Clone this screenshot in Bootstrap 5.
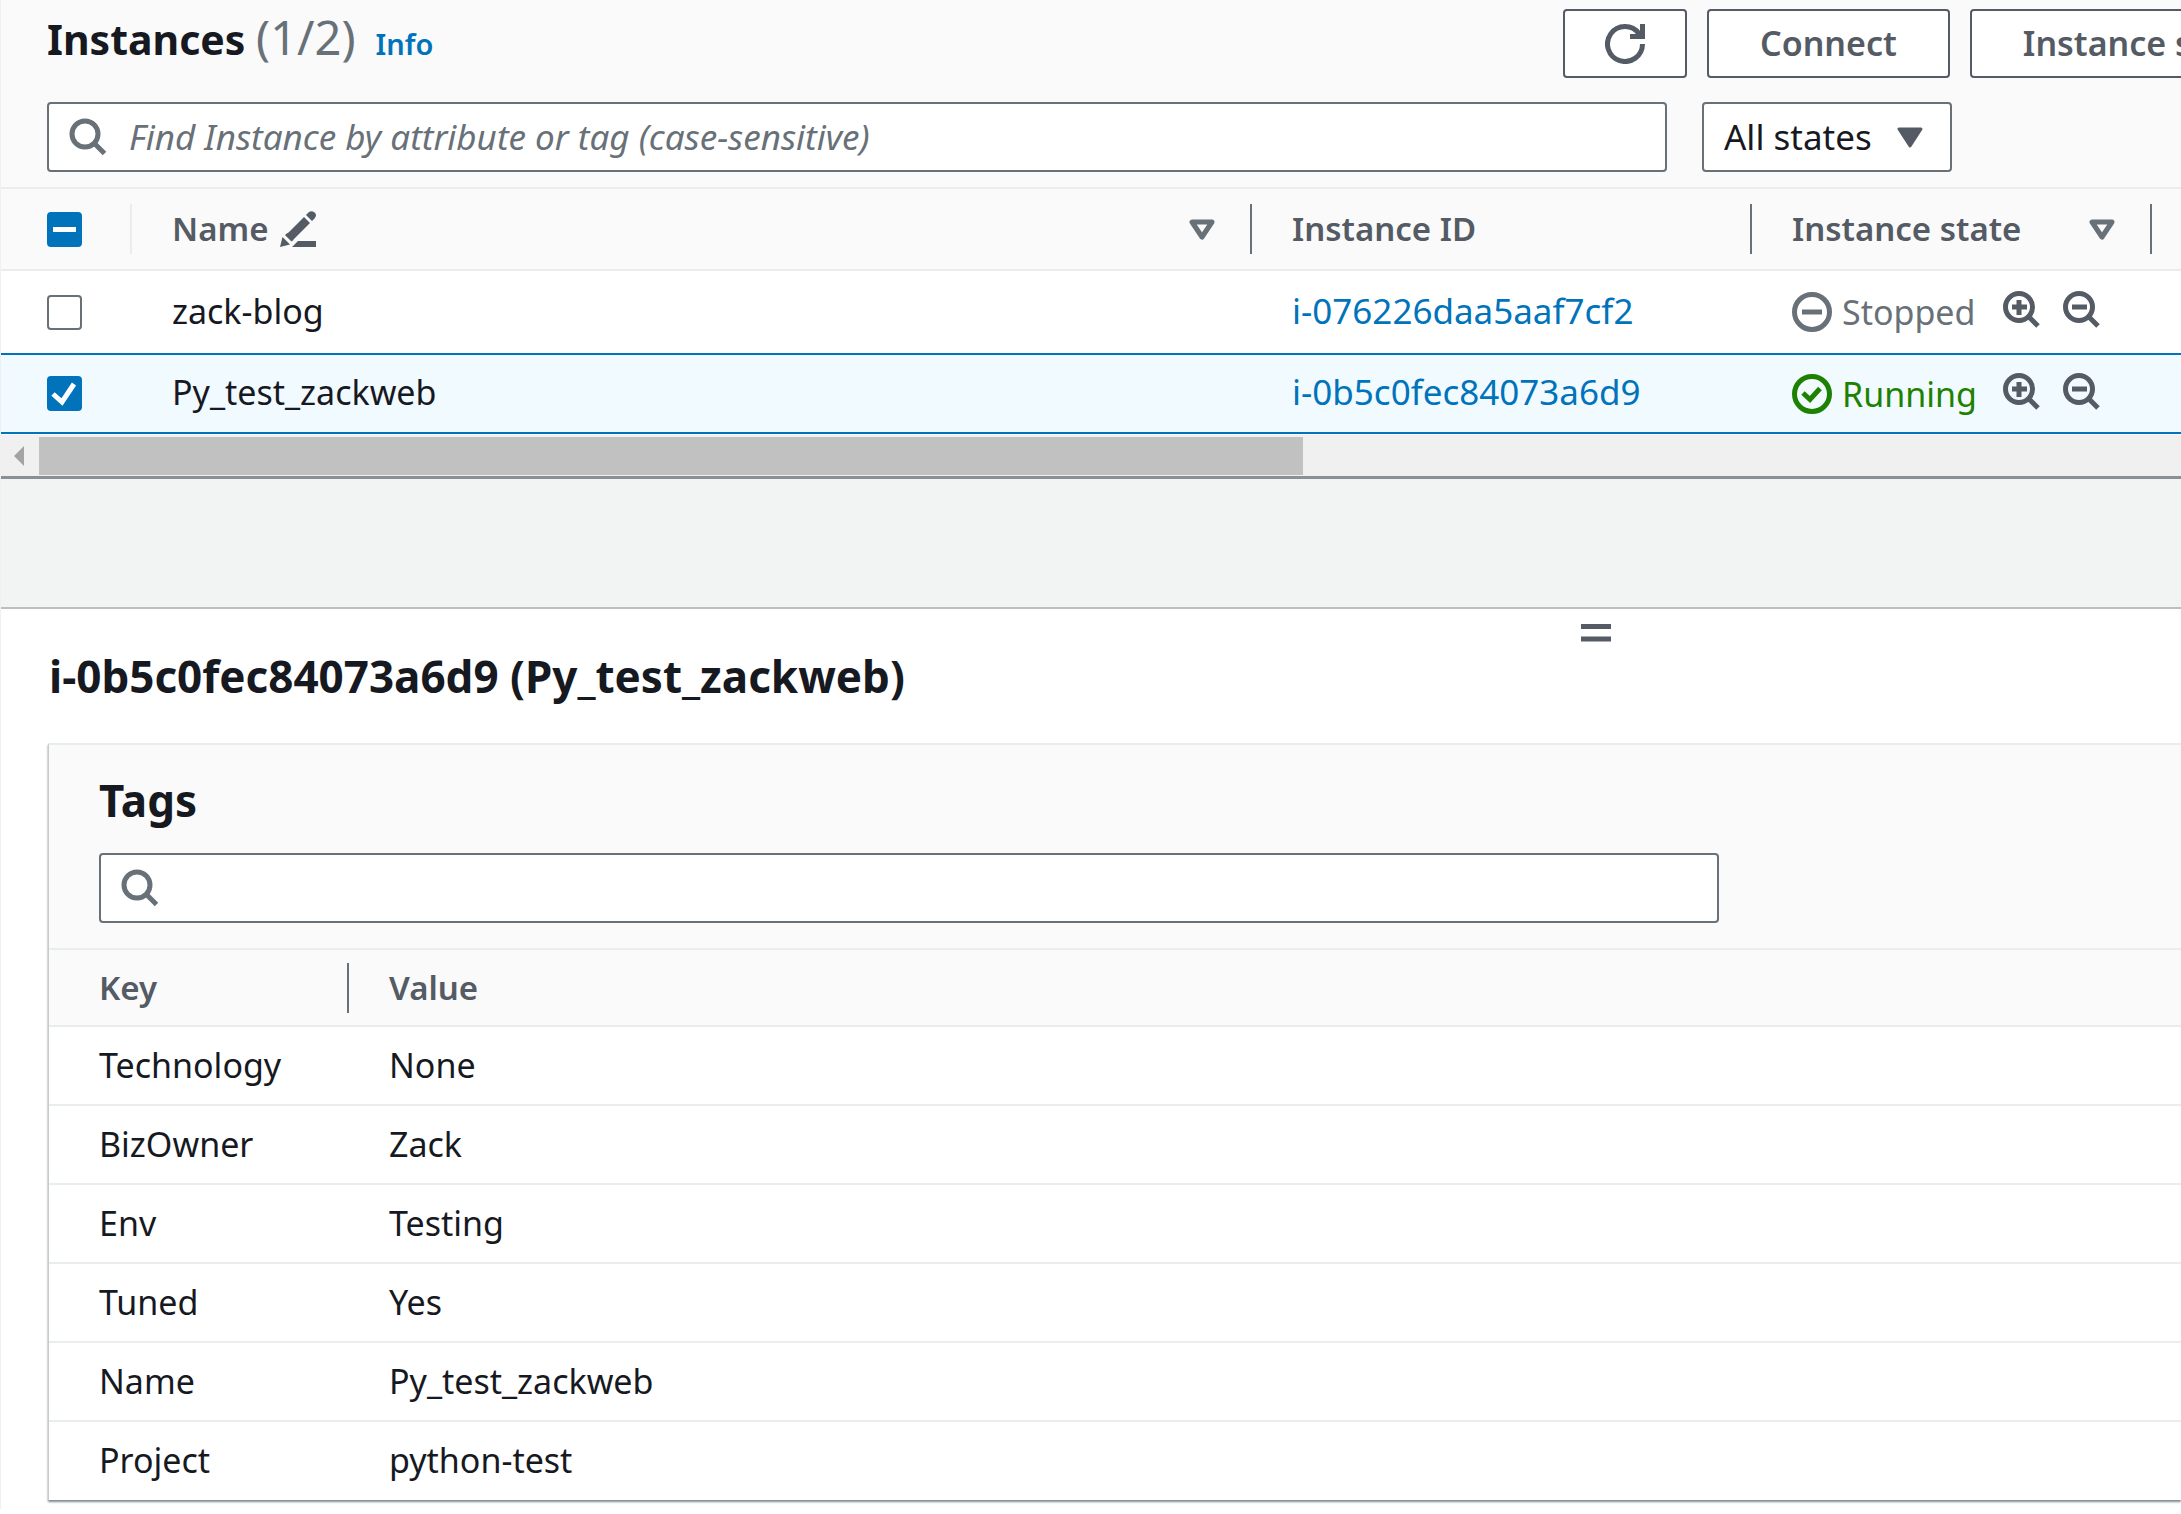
<!DOCTYPE html>
<html lang="en">
<head>
<meta charset="utf-8">
<meta name="viewport" content="width=device-width, initial-scale=1">
<title>Instances</title>
<link href="https://cdn.jsdelivr.net/npm/bootstrap@5.3.0/dist/css/bootstrap.min.css" rel="stylesheet">
<style>
  :root { --ink:#16191f; --soft:#545b64; --mute:#687078; --link:#0073bb; --line:#eaeded; }
  body { font-family:"Noto Sans",sans-serif; font-size:34px; line-height:48px; color:var(--ink); background:#fff; overflow-x:hidden; }
  .console { border-left:1px solid #eff0f0; overflow:hidden; }
  .console svg { display:block; flex:none; }
  .console a { color:var(--link); text-decoration:none; }
  .pane-head { background:#fafafa; padding:9px 0 15px 46px; }
  .title-area { width:calc(100% - 618px); flex:none; }
  .heading { font-size:44px; line-height:60px; font-weight:700; margin:0; }
  h1.heading { font-size:41px; line-height:56px; padding-right:20px; }
  .heading .count { font-size:47px; font-weight:400; color:var(--mute); }
  .info-link { font-size:29px; font-weight:600; }
  .tools { gap:20px; }
  .tool-btn { height:69px; flex:none; background:#fff; border:2px solid var(--soft); border-radius:4px; color:var(--soft); font-size:34px; font-weight:600; line-height:46px; padding:0 51px 2px; white-space:nowrap; }
  .tool-btn.refresh { padding:0 40px; }
  .search { height:70px; background:#fff; border:2px solid var(--mute); border-radius:4px; padding-left:20px; gap:22px; font-size:35px; }
  .search input { border:0; outline:0; background:transparent; min-width:0; padding:0; color:var(--ink); }
  .search input::placeholder { color:var(--mute); font-style:italic; opacity:1; }
  .search-main { width:calc(100% - 514px); }
  .search-tags { width:calc(100% - 462px); }
  .state-pick { width:250px; height:70px; margin-left:35px; }
  .state-pick select { appearance:none; width:100%; height:100%; background:#fff; border:2px solid var(--mute); border-radius:4px; padding:0 20px; color:var(--ink); font-size:35px; }
  .state-pick svg { position:absolute; right:29px; top:25px; pointer-events:none; }
  .grid { width:100%; table-layout:fixed; border-collapse:separate; border-spacing:0; margin:0; }
  .grid th, .grid td { padding:0; vertical-align:middle; white-space:nowrap; }
  .grid th { background:#fafafa; color:var(--soft); font-weight:600; font-size:33px; border-top:2px solid var(--line); border-bottom:2px solid var(--line); }
  .hd { height:50px; padding-left:40px; border-right:2px solid var(--mute); }
  .hd.pale { border-color:var(--line); }
  .hd.bare { border:0; }
  .hd.pick { padding-left:46px; }
  .sort { margin-left:auto; margin-right:35px; }
  .pencil { margin-left:12px; }
  .col-pick { width:131px; }
  .col-id { width:500px; }
  .col-state { width:400px; }
  .col-more { width:29px; }
  .col-key { width:300px; }
  .instances th { height:84px; }
  .grid.instances td { padding:0 0 3px 40px; height:82px; }
  .grid.instances td.state-cell { padding:0 0 0 40px; }
  .grid.instances td.pick-cell { padding:0 0 0 46px; }
  .instances td a { font-size:35px; }
  .instances tr.chosen td { background:#f1faff; height:81px; border-top:2px solid var(--link); border-bottom:2px solid var(--link); }
  .console .tick { appearance:none; width:35px; height:35px; margin:0; display:block; border:2px solid var(--mute); border-radius:4px; background-color:#fff; background-size:35px 35px; background-position:center; }
  .console .tick:checked, .console .tick:indeterminate { background-color:var(--link); border-color:var(--link); }
  .console .tick:checked { background-image:url("data:image/svg+xml,%3Csvg xmlns='http://www.w3.org/2000/svg' viewBox='0 0 35 35'%3E%3Cpath d='M6 18l9 8L27 8' fill='none' stroke='%23fff' stroke-width='5'/%3E%3C/svg%3E"); }
  .console .tick:indeterminate { background-image:url("data:image/svg+xml,%3Csvg xmlns='http://www.w3.org/2000/svg' viewBox='0 0 35 35'%3E%3Cpath d='M6 17.5h23' stroke='%23fff' stroke-width='5'/%3E%3C/svg%3E"); }
  .status { gap:10px; width:211px; }
  .stopped { color:var(--mute); }
  .running { color:#1d8102; }
  .plain-btn { border:0; background:none; padding:0 0 5px; color:var(--soft); }
  .plain-btn + .plain-btn { margin-left:23px; }
  .hscroll { height:42px; background:#f0f0f0; border-top:1px solid #fff; padding:0; }
  .hscroll .arrow { width:38px; }
  .hscroll .thumb { width:58%; height:38px; background:#c1c1c1; }
  .gap-band { height:133px; background:#f2f3f3; border-top:3px solid #879196; border-bottom:2px solid #b9c0c1; }
  .detail { padding:15px 0 9px 47px; }
  .grip { padding-left:1533px; }
  .detail-title { padding:4px 0 37px 1px; }
  .tag-card { border-top:2px solid var(--line); border-left:1px solid #c4cccc; box-shadow:0 2px 2px #7f8b90; }
  .tag-head { background:#fafafa; padding:25px 0 25px 50px; }
  .tag-head .heading { margin-bottom:23px; }
  .tags th { height:79px; }
  .grid.tags td { height:79px; padding:0 0 2px 40px; border-bottom:2px solid var(--line); }
  .grid.tags td:first-child, .tags th:first-child .hd { padding-left:50px; }
  .grid.tags tr:last-child td { border-bottom:0; height:78px; }
</style>
</head>
<body>
<div class="console">
  <section>
    <header class="pane-head">
      <div class="d-flex">
        <div class="title-area d-flex align-items-baseline">
          <h1 class="heading">Instances <span class="count">(1/2)</span></h1>
          <a class="info-link" href="#">Info</a>
        </div>
        <div class="tools d-flex flex-nowrap">
          <button class="tool-btn refresh" type="button" aria-label="Refresh">
            <svg width="40" height="40" viewBox="0 0 40 40" fill="none" stroke="currentColor" stroke-width="5"><path d="M37.500 20A17.500 17.500 0 1 1 34 9.500"/><path d="M37.500 0v12.500H25"/><path d="M30 10l6-3v5z" fill="currentColor" stroke="none"/></svg>
          </button>
          <button class="tool-btn" type="button">Connect</button>
          <button class="tool-btn" type="button">Instance state</button>
        </div>
      </div>
      <div class="d-flex mt-4">
        <label class="search search-main d-flex align-items-center">
          <svg width="38" height="38" viewBox="0 0 38 38" fill="none" stroke="#687078" stroke-width="5"><circle cx="16" cy="16" r="13"/><path d="M25 25l10.500 10.500"/></svg>
          <input class="flex-grow-1" type="text" aria-label="Find instances" placeholder="Find Instance by attribute or tag (case-sensitive)">
        </label>
        <div class="state-pick position-relative">
          <select aria-label="Instance states"><option>All states</option></select>
          <svg width="26" height="21" viewBox="0 0 26 21" fill="#545b64" stroke="#545b64" stroke-width="3" stroke-linejoin="round"><path d="M2 2h22L13 19z"/></svg>
        </div>
      </div>
    </header>

    <table class="grid instances">
      <colgroup><col class="col-pick"><col><col class="col-id"><col class="col-state"><col class="col-more"></colgroup>
      <thead>
        <tr>
          <th><div class="hd pale pick d-flex align-items-center"><input class="tick form-check-input" id="all" type="checkbox" aria-label="Select all instances"></div></th>
          <th><div class="hd d-flex align-items-center">Name
            <svg class="pencil" width="36" height="36" viewBox="0 0 36 36" fill="#545b64"><path d="M12 36l6-6h18v6z"/><path d="M0 36l2.500-10 7.500 7.500z"/><path d="M8.500 21.500L24 6l6 6L14 28q-1 1.500-2.500 2.500L5 24q1-1.500 3.500-2.500z"/><path d="M26 4l2.500-2.500Q31.500-1 34.500 1.500T34.500 7.500L32 10z"/></svg>
            <svg class="sort" width="26" height="21" viewBox="0 0 26 21" fill="none" stroke="#687078" stroke-width="5" stroke-linejoin="round"><path d="M3 3h20L13 18z"/></svg></div></th>
          <th><div class="hd d-flex align-items-center">Instance ID</div></th>
          <th><div class="hd d-flex align-items-center">Instance state
            <svg class="sort" width="26" height="21" viewBox="0 0 26 21" fill="none" stroke="#687078" stroke-width="5" stroke-linejoin="round"><path d="M3 3h20L13 18z"/></svg></div></th>
          <th></th>
        </tr>
      </thead>
      <tbody>
        <tr>
          <td class="pick-cell"><input class="tick form-check-input" type="checkbox" aria-label="Select zack-blog"></td>
          <td>zack-blog</td>
          <td><a href="#">i-076226daa5aaf7cf2</a></td>
          <td class="state-cell"><div class="d-flex align-items-center">
            <span class="status stopped d-flex align-items-center"><svg width="40" height="40" viewBox="0 0 40 40" fill="none" stroke="currentColor" stroke-width="5"><circle cx="20" cy="20" r="17.500"/><path d="M10 20h20"/></svg>Stopped</span>
            <button class="plain-btn" type="button" aria-label="Include Stopped"><svg width="37" height="37" viewBox="0 0 37 37" fill="none" stroke="currentColor" stroke-width="5"><circle cx="16" cy="16" r="13.500"/><path d="M9 16h15M16 9v15M26 26l9 9"/></svg></button>
            <button class="plain-btn" type="button" aria-label="Exclude Stopped"><svg width="37" height="37" viewBox="0 0 37 37" fill="none" stroke="currentColor" stroke-width="5"><circle cx="16" cy="16" r="13.500"/><path d="M9 16h15M26 26l9 9"/></svg></button>
          </div></td>
          <td></td>
        </tr>
        <tr class="chosen">
          <td class="pick-cell"><input class="tick form-check-input" type="checkbox" checked aria-label="Select Py_test_zackweb"></td>
          <td>Py_test_zackweb</td>
          <td><a href="#">i-0b5c0fec84073a6d9</a></td>
          <td class="state-cell"><div class="d-flex align-items-center">
            <span class="status running d-flex align-items-center"><svg width="40" height="40" viewBox="0 0 40 40" fill="none" stroke="currentColor" stroke-width="5"><circle cx="20" cy="20" r="17.500"/><path d="M11 19l7 6.500L28 14.500"/></svg>Running</span>
            <button class="plain-btn" type="button" aria-label="Include Running"><svg width="37" height="37" viewBox="0 0 37 37" fill="none" stroke="currentColor" stroke-width="5"><circle cx="16" cy="16" r="13.500"/><path d="M9 16h15M16 9v15M26 26l9 9"/></svg></button>
            <button class="plain-btn" type="button" aria-label="Exclude Running"><svg width="37" height="37" viewBox="0 0 37 37" fill="none" stroke="currentColor" stroke-width="5"><circle cx="16" cy="16" r="13.500"/><path d="M9 16h15M26 26l9 9"/></svg></button>
          </div></td>
          <td></td>
        </tr>
      </tbody>
    </table>
    <div class="hscroll d-flex align-items-center">
      <div class="arrow"><svg class="mx-auto" width="12" height="20" viewBox="0 0 12 20" fill="#a3a3a3"><path d="M10 0v20L0 10z"/></svg></div>
      <div class="thumb"></div>
    </div>
  </section>

  <div class="gap-band"></div>

  <section class="detail">
    <div class="grip"><svg width="30" height="18" viewBox="0 0 30 18" fill="#545b64"><path d="M0 0h30v5H0zM0 12.500h30v5H0z"/></svg></div>
    <h2 class="heading detail-title">i-0b5c0fec84073a6d9 (Py_test_zackweb)</h2>
    <div class="tag-card">
      <div class="tag-head">
        <h3 class="heading">Tags</h3>
        <label class="search search-tags d-flex align-items-center">
          <svg width="38" height="38" viewBox="0 0 38 38" fill="none" stroke="#687078" stroke-width="5"><circle cx="16" cy="16" r="13"/><path d="M25 25l10.500 10.500"/></svg>
          <input class="flex-grow-1" type="text" aria-label="Search tags">
        </label>
      </div>
      <table class="grid tags">
        <colgroup><col class="col-key"><col></colgroup>
        <thead><tr><th><div class="hd d-flex align-items-center">Key</div></th><th><div class="hd bare d-flex align-items-center">Value</div></th></tr></thead>
        <tbody>
          <tr><td>Technology</td><td>None</td></tr>
          <tr><td>BizOwner</td><td>Zack</td></tr>
          <tr><td>Env</td><td>Testing</td></tr>
          <tr><td>Tuned</td><td>Yes</td></tr>
          <tr><td>Name</td><td>Py_test_zackweb</td></tr>
          <tr><td>Project</td><td>python-test</td></tr>
        </tbody>
      </table>
    </div>
  </section>
</div>
<script src="https://cdn.jsdelivr.net/npm/bootstrap@5.3.0/dist/js/bootstrap.bundle.min.js"></script>
<script>document.getElementById('all').indeterminate = true;</script>
</body>
</html>
